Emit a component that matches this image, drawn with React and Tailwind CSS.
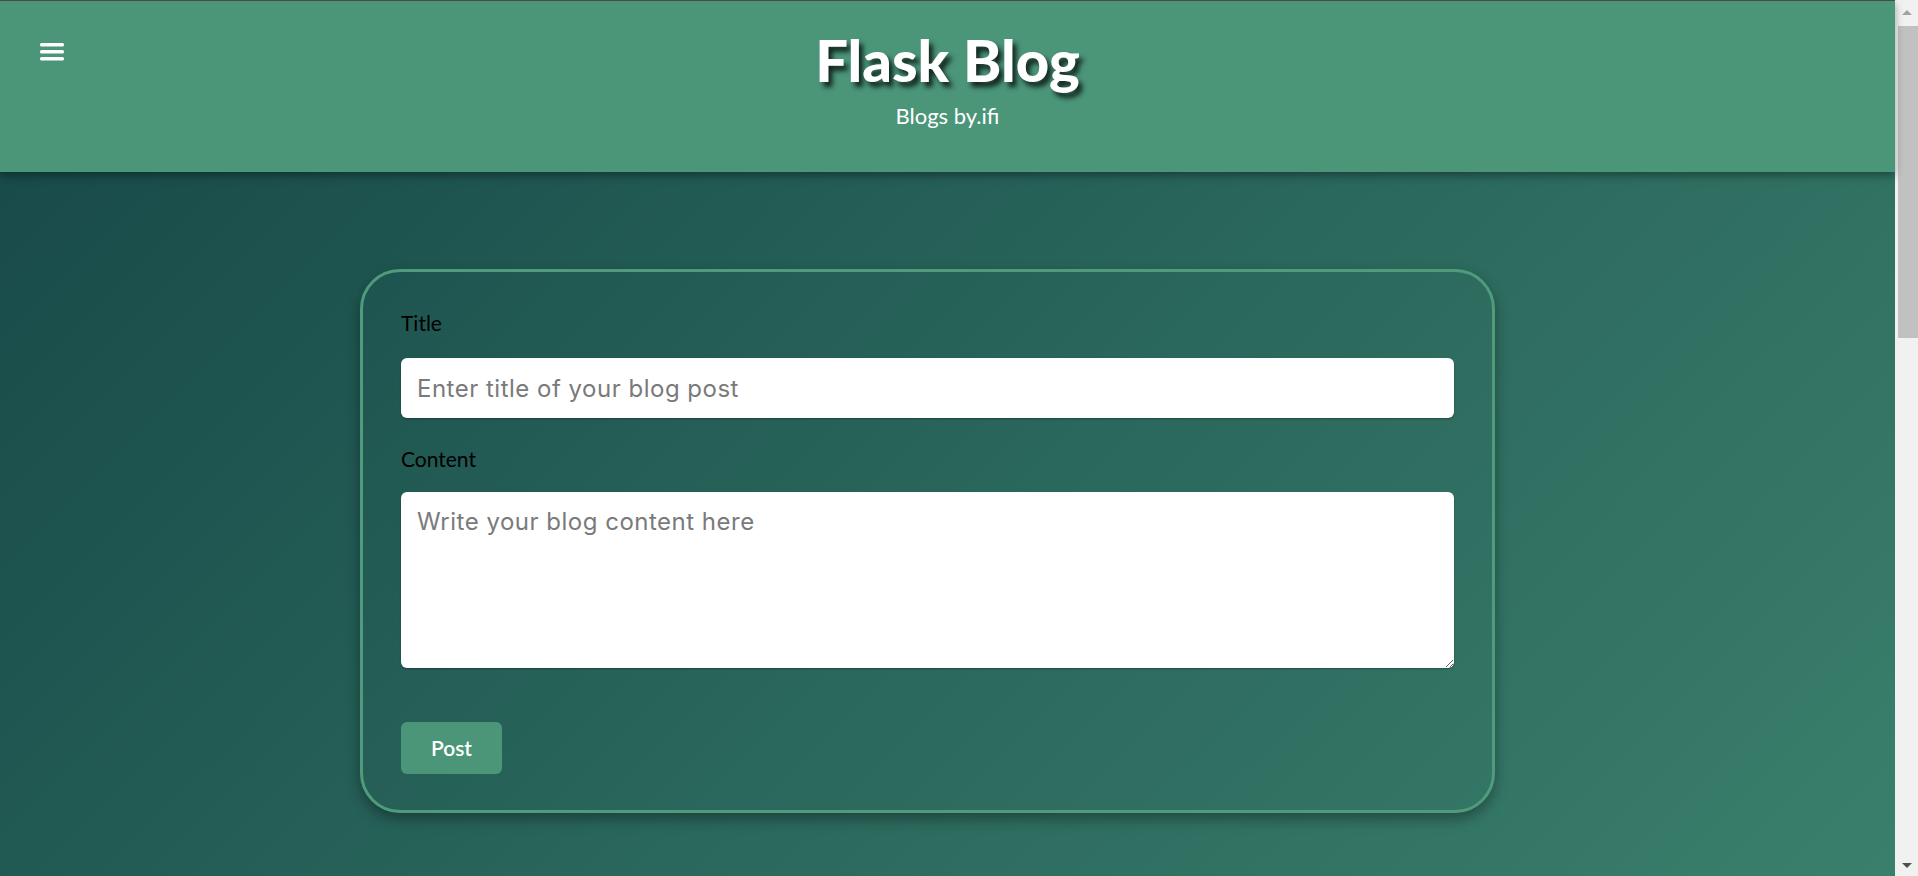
import React from 'react';

const Header = () => (
  <header className="relative h-[172px] shrink-0 bg-[#4b9579] border-t border-[#4a4a4a] shadow-[0_4px_8px_rgba(0,0,0,0.35)] z-10">
    <button className="absolute left-[40px] top-[42px] w-[24px] h-[18px]" aria-label="menu">
      <svg viewBox="0 0 24 18" className="w-[24px] h-[18px]">
        <rect x="0" y="0" width="24" height="3.4" rx="1.5" fill="#fff" />
        <rect x="0" y="7" width="24" height="3.4" rx="1.5" fill="#fff" />
        <rect x="0" y="14" width="24" height="3.4" rx="1.5" fill="#fff" />
      </svg>
    </button>
    <div className="flex flex-col items-center pt-[24px]">
      <h1 className="text-[58px] leading-[70px] font-black text-white [text-shadow:4px_5px_5px_rgba(0,0,0,0.75)] font-['Lato',sans-serif]">
        Flask Blog
      </h1>
      <p className="mt-[8px] text-[22px] leading-[26px] text-white font-['Lato',sans-serif]">Blogs by.ifi</p>
    </div>
  </header>
);

const PostForm = () => (
  <form className="ml-[360px] w-[1135px] mt-[97px] rounded-[40px] border-[3px] border-[#4f9b7b] shadow-[0_6px_14px_rgba(0,0,0,0.35)] px-[38px] pt-[39px] pb-[36px] font-['Lato',sans-serif]">
    <label className="block text-[21px] leading-[24px] text-black">Title</label>
    <input
      type="text"
      placeholder="Enter title of your blog post"
      className="mt-[23px] block w-full h-[60px] rounded-[6px] bg-white px-[16px] text-[24px] tracking-[0.5px] text-gray-700 placeholder:text-[#7a7a7a] shadow-[0_1px_2px_rgba(0,0,0,0.3)] outline-none font-['Inter',sans-serif]"
    />
    <label className="mt-[29px] block text-[21px] leading-[24px] text-black">Content</label>
    <textarea
      placeholder="Write your blog content here"
      className="mt-[21px] block w-full h-[176px] rounded-[6px] bg-white px-[16px] py-[12px] text-[24px] tracking-[0.5px] text-gray-700 placeholder:text-[#7a7a7a] shadow-[0_1px_2px_rgba(0,0,0,0.3)] outline-none font-['Inter',sans-serif]"
    />
    <button
      type="button"
      className="mt-[54px] block w-[101px] h-[52px] rounded-[6px] bg-[#4b9579] text-white text-[21px] font-semibold"
    >
      Post
    </button>
  </form>
);

const Scrollbar = () => (
  <div className="w-[23px] shrink-0 h-full bg-[#f1f1f1] flex flex-col items-center">
    <div className="h-[24px] flex items-center justify-center">
      <div className="w-0 h-0 border-l-[5px] border-r-[5px] border-b-[5px] border-l-transparent border-r-transparent border-b-[#a3a3a3]" />
    </div>
    <div className="ml-[2px] w-[20px] h-[312px] bg-[#c1c1c1] mt-[2px]" />
    <div className="flex-1" />
    <div className="h-[22px] flex items-center justify-center">
      <div className="w-0 h-0 border-l-[5px] border-r-[5px] border-t-[5px] border-l-transparent border-r-transparent border-t-[#505050]" />
    </div>
  </div>
);

export default function App() {
  return (
    <div className="flex h-screen overflow-hidden">
      <main className="flex-1 flex flex-col bg-[linear-gradient(135deg,#164747_0%,#2a675c_55%,#3a7f6c_100%)]">
        <Header />
        <PostForm />
      </main>
      <Scrollbar />
    </div>
  );
}
